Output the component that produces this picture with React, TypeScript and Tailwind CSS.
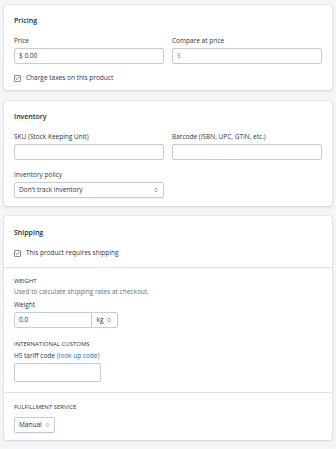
import { ChevronsUpDown, Check } from "lucide-react";

function Label({ children }: { children: React.ReactNode }) {
  return <p className="text-[6.5px] leading-[10px] text-[#2c3640]">{children}</p>;
}

function Input({ value, className = "" }: { value?: string; className?: string }) {
  return (
    <div
      className={`flex h-[16px] items-center rounded-[2px] border border-[#c4cdd5] bg-white px-[4px] text-[6.5px] text-[#2c3640] shadow-[inset_0_1px_0_rgba(99,115,129,0.05)] ${className}`}
    >
      {value}
    </div>
  );
}

function Select({ value, className = "" }: { value: string; className?: string }) {
  return (
    <div
      className={`flex h-[16px] items-center justify-between rounded-[2px] border border-[#c4cdd5] bg-white px-[4px] text-[6.5px] text-[#2c3640] shadow-[0_1px_0_rgba(22,29,37,0.05)] ${className}`}
    >
      <span>{value}</span>
      <ChevronsUpDown className="h-[6px] w-[6px] text-[#637381]" strokeWidth={2.5} />
    </div>
  );
}

function Checkbox({ label }: { label: string }) {
  return (
    <div className="flex items-center gap-[5px]">
      <div className="flex h-[7px] w-[7px] items-center justify-center rounded-[1px] border border-[#8c9196] bg-white">
        <Check className="h-[5px] w-[5px] text-[#2c3640]" strokeWidth={3} />
      </div>
      <span className="text-[6.5px] leading-[10px] text-[#2c3640]">{label}</span>
    </div>
  );
}

function Heading({ children }: { children: React.ReactNode }) {
  return (
    <p className="text-[6px] uppercase leading-[10px] text-[#2c3640]">{children}</p>
  );
}

function Title({ children }: { children: React.ReactNode }) {
  return <h2 className="text-[7px] font-semibold leading-[11px] text-[#212b36]">{children}</h2>;
}

const card =
  "rounded-[3px] bg-white shadow-[0_0_0_1px_rgba(63,63,68,0.05),0_1px_3px_0_rgba(63,63,68,0.15)]";

export default function App() {
  return (
    <div
      className="min-h-[449px] w-[336px] bg-[#f4f6f8] px-[4px] pt-[5px] pb-[6px]"
      style={{ fontFamily: '"Open Sans", "Noto Sans", sans-serif' }}
    >
      {/* Pricing */}
      <div className={`${card} px-[10px] pt-[10px] pb-[7px]`}>
        <Title>Pricing</Title>
        <div className="mt-[10px] grid grid-cols-2 gap-[8px]">
          <div>
            <Label>Price</Label>
            <div className="mt-[2px]">
              <Input value="$ 0.00" />
            </div>
          </div>
          <div>
            <Label>Compare at price</Label>
            <div className="mt-[2px]">
              <Input value="$" className="text-[#919eab]" />
            </div>
          </div>
        </div>
        <div className="mt-[9px]">
          <Checkbox label="Charge taxes on this product" />
        </div>
      </div>

      {/* Inventory */}
      <div className={`${card} mt-[11px] px-[10px] pt-[10px] pb-[8px]`}>
        <Title>Inventory</Title>
        <div className="mt-[10px] grid grid-cols-2 gap-[8px]">
          <div>
            <Label>SKU (Stock Keeping Unit)</Label>
            <div className="mt-[2px]">
              <Input />
            </div>
          </div>
          <div>
            <Label>Barcode (ISBN, UPC, GTIN, etc.)</Label>
            <div className="mt-[2px]">
              <Input />
            </div>
          </div>
        </div>
        <div className="mt-[10px] grid grid-cols-2 gap-[8px]">
          <div>
            <Label>Inventory policy</Label>
            <div className="mt-[2px]">
              <Select value="Don't track inventory" />
            </div>
          </div>
        </div>
      </div>

      {/* Shipping */}
      <div className={`${card} mt-[10px]`}>
        <div className="px-[10px] pt-[11px] pb-[9px]">
          <Title>Shipping</Title>
          <div className="mt-[10px]">
            <Checkbox label="This product requires shipping" />
          </div>
        </div>
        <div className="border-t border-[#dfe3e8] px-[10px] pt-[8px] pb-[10px]">
          <Heading>Weight</Heading>
          <p className="mt-[1px] text-[6.5px] leading-[10px] text-[#637381]">
            Used to calculate shipping rates at checkout.
          </p>
          <div className="mt-[3px]">
            <Label>Weight</Label>
          </div>
          <div className="mt-[2px] flex h-[16px] w-[104px] rounded-[2px] border border-[#c4cdd5] bg-white text-[6.5px] text-[#2c3640]">
            <div className="flex flex-1 items-center px-[4px]">0.0</div>
            <div className="flex w-[26px] items-center justify-center gap-[3px] border-l border-[#c4cdd5]">
              <span>kg</span>
              <ChevronsUpDown className="h-[6px] w-[6px] text-[#637381]" strokeWidth={2.5} />
            </div>
          </div>
          <div className="mt-[11px]">
            <Heading>International customs</Heading>
          </div>
          <p className="mt-[2px] text-[6.5px] leading-[10px] text-[#2c3640]">
            HS tariff code <span className="text-[#007ace]">(look up code)</span>
          </p>
          <Input className="mt-[2px] h-[19px] w-[87px]" />
        </div>
        <div className="border-t border-[#dfe3e8] px-[10px] pt-[9px] pb-[7px]">
          <Heading>Fulfillment service</Heading>
          <Select value="Manual" className="mt-[5px] w-[41px] gap-[3px]" />
        </div>
      </div>
    </div>
  );
}
